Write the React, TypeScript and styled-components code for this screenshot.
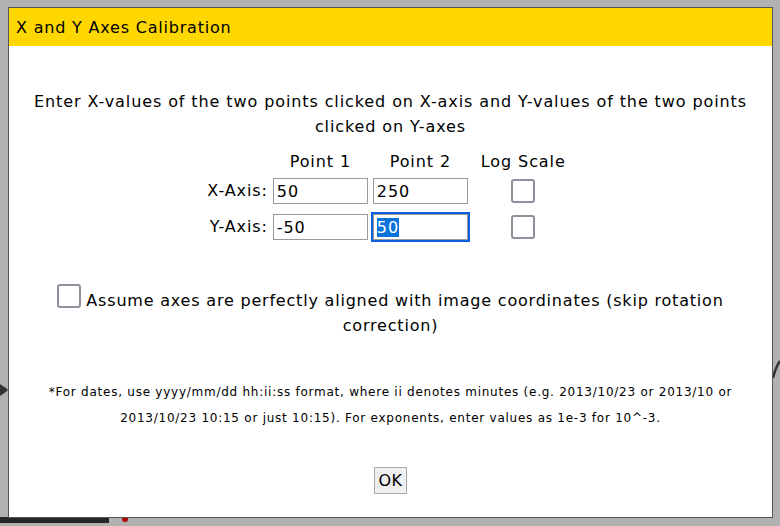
import React, { useEffect, useRef } from "react";
import styled, { createGlobalStyle } from "styled-components";

const Global = createGlobalStyle`
  html, body { margin: 0; padding: 0; background: #b1b1b1; }
  body { font-family: "DejaVu Sans", Verdana, sans-serif; color: #000; letter-spacing: 0.9px; }
  ::selection { background: #0a74da; color: #fff; }
`;

const Page = styled.div`
  position: relative;
  width: 780px;
  height: 526px;
  overflow: hidden;
  padding: 7px 0 0 8px;
  box-sizing: border-box;
`;

const Backdrop = styled.svg`
  position: absolute;
  left: 0;
  top: 0;
  width: 780px;
  height: 526px;
`;

const Dialog = styled.div`
  position: relative;
  width: 765px;
  height: 511px;
  box-sizing: border-box;
  border: 1px solid #555;
  background: #fff;
  display: flex;
  flex-direction: column;
`;

const TitleBar = styled.div`
  height: 38px;
  background: #ffd700;
  padding: 2px 7px 0;
  box-sizing: border-box;
  font-size: 16px;
  line-height: 36px;
  letter-spacing: 0.8px;
`;

const Body = styled.div`
  display: flex;
  flex-direction: column;
  align-items: center;
  padding: 0 20px;
  text-align: center;
`;

const Intro = styled.p`
  margin: 43px 0 0;
  font-size: 16px;
  line-height: 25px;
`;

const Table = styled.div`
  margin-top: 12px;
  display: grid;
  grid-template-columns: auto 95px 95px auto;
  column-gap: 5px;
  align-items: center;
  font-size: 16px;
`;

const HeadCell = styled.div<{ $pad?: boolean }>`
  line-height: 22px;
  padding: 0 ${(p) => (p.$pad ? "8px" : "0")} 5px;
  text-align: center;
`;

const RowLabel = styled.div<{ $last?: boolean }>`
  text-align: right;
  line-height: 26px;
  margin-bottom: ${(p) => (p.$last ? "0" : "10px")};
`;

const Cell = styled.div<{ $last?: boolean }>`
  display: flex;
  justify-content: center;
  margin-bottom: ${(p) => (p.$last ? "0" : "10px")};
`;

const NumInput = styled.input<{ $active?: boolean }>`
  width: 95px;
  height: 26px;
  box-sizing: border-box;
  border: 1px solid #9a9a9a;
  padding: 0 3px;
  font-family: "DejaVu Sans", Verdana, sans-serif;
  font-size: 16px;
  letter-spacing: 0.9px;
  color: #000;
  background: #fff;
  outline: none;
  box-shadow: ${(p) => (p.$active ? "0 0 0 2px #0b62dc" : "none")};
`;

const Box = styled.input`
  appearance: none;
  -webkit-appearance: none;
  width: 24px;
  height: 24px;
  margin: 0;
  box-sizing: border-box;
  border: 2px solid #8f8f9d;
  border-radius: 3px;
  background: #fff;
`;

const AlignNote = styled.p`
  margin: 44px 0 0;
  font-size: 16px;
  line-height: 25px;
  letter-spacing: 0.8px;
`;

const InlineBox = styled(Box)`
  vertical-align: -2px;
  margin-right: 5px;
`;

const Footnote = styled.p`
  margin: 41px 0 0;
  font-size: 12px;
  line-height: 26px;
  letter-spacing: 0.75px;
`;

const OkButton = styled.button`
  margin-top: 36px;
  width: 33px;
  height: 27px;
  padding: 0;
  box-sizing: border-box;
  border: 1px solid #a9a9a9;
  background: #efefef;
  font-family: "DejaVu Sans", Verdana, sans-serif;
  font-size: 16px;
  letter-spacing: 0.5px;
  color: #000;
`;

export default function App() {
  const ref = useRef<HTMLInputElement>(null);
  useEffect(() => {
    const el = ref.current;
    if (el) {
      el.focus();
      el.select();
    }
  }, []);
  return (
    <>
      <Global />
      <Page>
        <Backdrop viewBox="0 0 780 526">
          <rect x="0" y="517" width="109" height="6" fill="#262626" />
          <circle cx="125" cy="519" r="3" fill="#b00000" />
          <path d="M0 384 C4 387 7 388 8 390 C6 392 3 394 0 396 Z" fill="#333" />
          <path d="M773 378 C775 370 777 365 780 361" stroke="#333" strokeWidth="2.5" fill="none" />
        </Backdrop>
        <Dialog>
          <TitleBar>X and Y Axes Calibration</TitleBar>
          <Body>
            <Intro>
              Enter X-values of the two points clicked on X-axis and Y-values of the two points clicked on Y-axes
            </Intro>
            <Table>
              <HeadCell />
              <HeadCell>Point 1</HeadCell>
              <HeadCell>Point 2</HeadCell>
              <HeadCell $pad>Log Scale</HeadCell>

              <RowLabel>X-Axis:</RowLabel>
              <Cell><NumInput defaultValue="50" /></Cell>
              <Cell><NumInput defaultValue="250" /></Cell>
              <Cell><Box type="checkbox" /></Cell>

              <RowLabel $last>Y-Axis:</RowLabel>
              <Cell $last><NumInput defaultValue="-50" /></Cell>
              <Cell $last><NumInput ref={ref} $active defaultValue="50" /></Cell>
              <Cell $last><Box type="checkbox" /></Cell>
            </Table>
            <AlignNote>
              <InlineBox type="checkbox" />
              Assume axes are perfectly aligned with image coordinates (skip rotation correction)
            </AlignNote>
            <Footnote>
              *For dates, use yyyy/mm/dd hh:ii:ss format, where ii denotes minutes (e.g. 2013/10/23 or 2013/10 or
              2013/10/23 10:15 or just 10:15). For exponents, enter values as 1e-3 for 10^-3.
            </Footnote>
            <OkButton>OK</OkButton>
          </Body>
        </Dialog>
      </Page>
    </>
  );
}
